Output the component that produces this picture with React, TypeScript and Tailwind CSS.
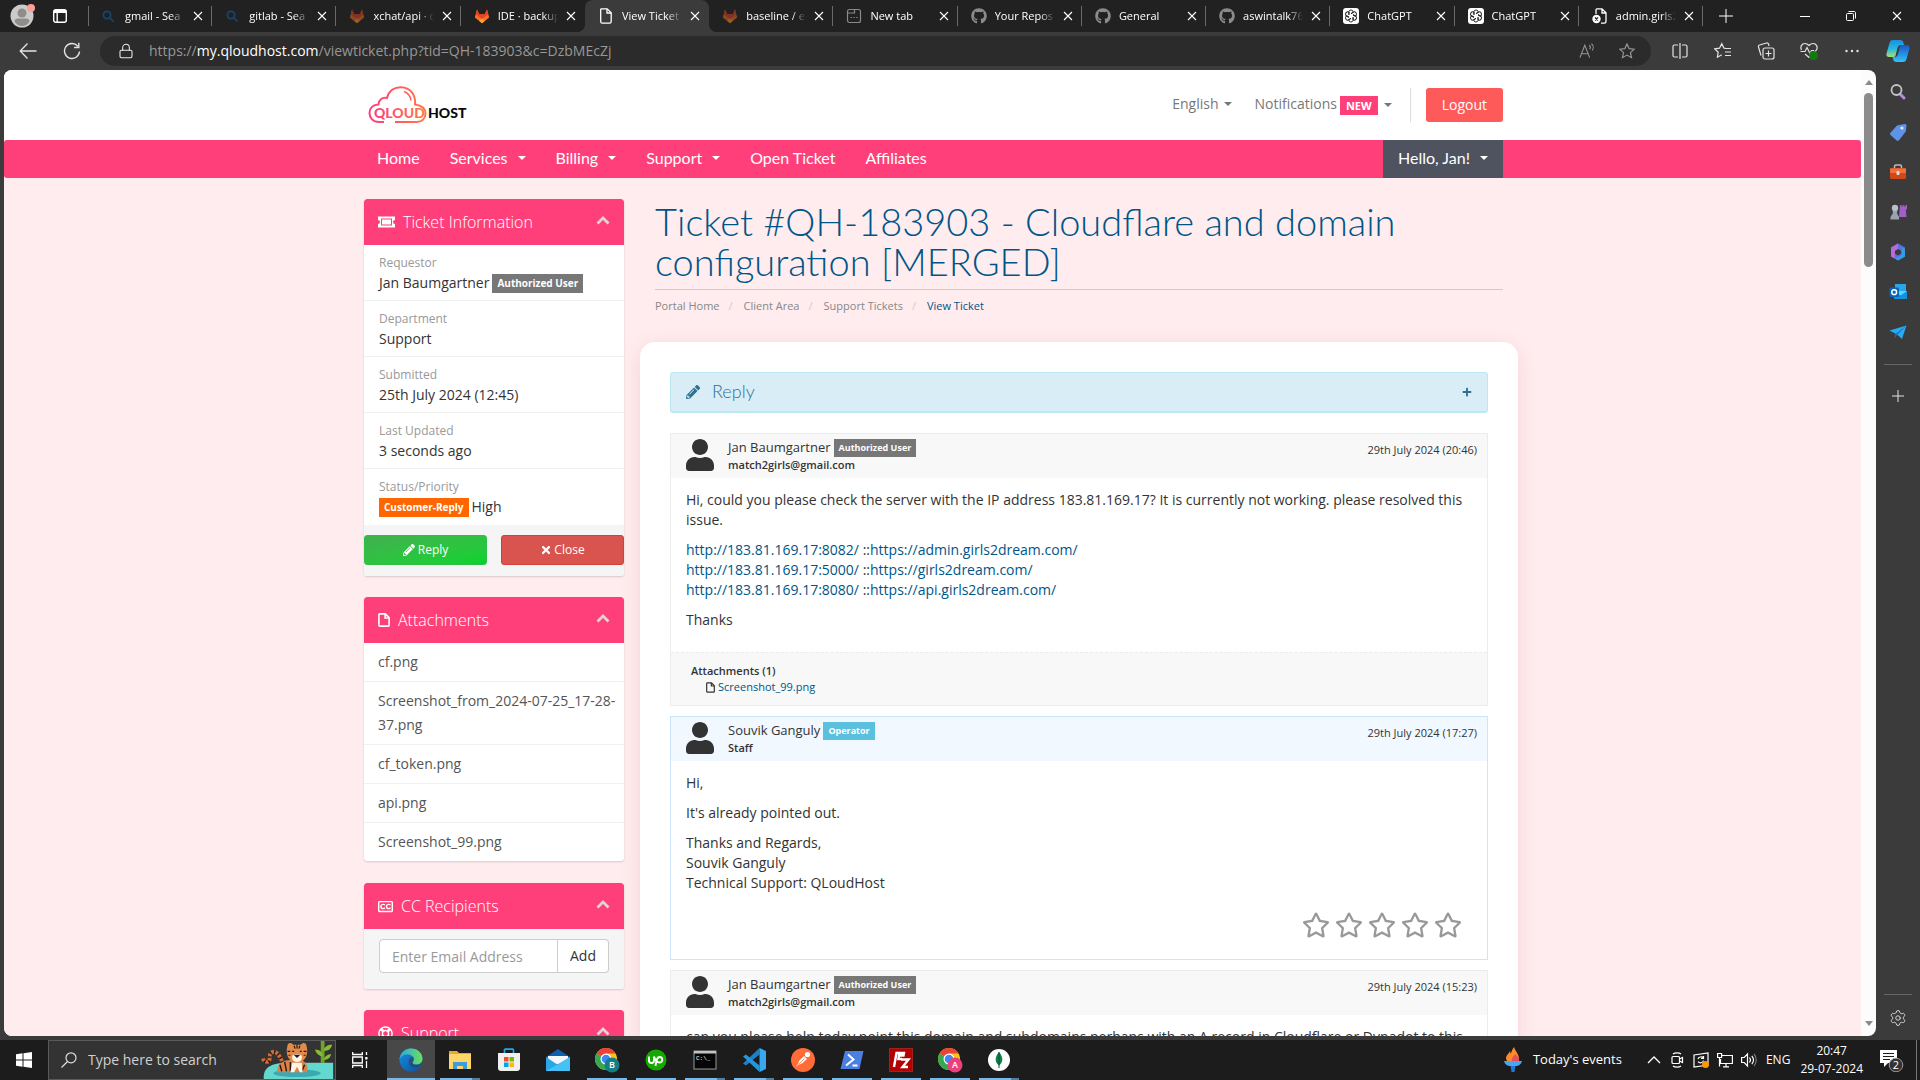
import React from "react";
import {
  FaGithub,
  FaPencilAlt,
  FaPlus,
  FaRegClosedCaptioning,
  FaRegLifeRing,
  FaRegStar,
  FaTimes,
  FaUser,
} from "react-icons/fa";
import { Lock, Settings } from "lucide-react";

/* ---------- shared small drawings ---------- */

function Caret() {
  return <span className="inline-block border-x-4 border-t-4 border-x-transparent border-t-current" />;
}

function FileOutline({ className }: { className: string }) {
  return (
    <svg viewBox="0 0 12 14" className={`fill-none stroke-current ${className}`} strokeWidth="1.6">
      <path d="M1.500.9h5.800l3.800 3.800v7.600c0 .5-.3.800-.8.800H1.700c-.5 0-.8-.3-.8-.8V1.700c0-.5.2-.8.600-.8z" />
      <path d="M7.100 1v4h4" />
    </svg>
  );
}

function GitlabIcon({ dim }: { dim?: boolean }) {
  return (
    <svg viewBox="0 0 16 16" className={dim ? "size-4 opacity-50" : "size-4"}>
      <path d="M8 15.2 0.8 9.6 3 1.4 5.3 6.2h5.4L13 1.4l2.2 8.2z" fill="#fc6d26" />
      <path d="M3 1.4 5.3 6.2h5.4L13 1.4l1.2 4.8L8 11 1.8 6.2z" fill="#e24329" />
      <path d="M8 15.2 5 12.8 8 10.4l3 2.4z" fill="#fca326" />
    </svg>
  );
}

function BingIcon() {
  return (
    <svg viewBox="0 0 16 16" className="size-4 fill-none stroke-[#17456d]" strokeWidth="1.8">
      <circle cx="6" cy="7" r="3.6" />
      <path d="m8.600 9.700 4 4" />
    </svg>
  );
}

function PageIcon() {
  return (
    <svg viewBox="0 0 16 16" className="size-4 fill-none stroke-white" strokeWidth="1.3">
      <path d="M3.2.8h6l4 4v8.7c0 1-.6 1.7-1.6 1.7H4.4c-1 0-1.7-.7-1.7-1.7V1.9c0-.6.2-1.1.5-1.1z" />
      <path d="M9 1v4h4.2" />
    </svg>
  );
}

function NewTabIcon() {
  return (
    <svg viewBox="0 0 16 16" className="size-4 fill-none stroke-[#8a8a8a]" strokeWidth="1.2">
      <rect x="1.5" y="1.5" width="13" height="13" rx="2" />
      <path d="M1.5 5h7V1.5M4.500 9.500h1.400M7.300 9.500h1.400M10.200 9.500h1.400" />
    </svg>
  );
}

function OpenAiIcon() {
  return (
    <svg viewBox="0 0 16 16" className="size-4">
      <rect width="16" height="16" rx="3" fill="#fff" />
      <g fill="none" stroke="#222" strokeWidth="1">
        {[0, 60, 120, 180, 240, 300].map((a) => (
          <path key={a} transform={`rotate(${a} 8 8)`} d="M8 5.6 10.3 4.3a2.3 2.3 0 0 0-4.4-.9V6.8" />
        ))}
      </g>
    </svg>
  );
}

function AdminIcon() {
  return (
    <svg viewBox="0 0 16 16" className="size-4 fill-none stroke-white" strokeWidth="1.3">
      <path d="M4 6V1.8C4 1.2 4.4.8 5 .8h5l4 4v8.7c0 1-.6 1.7-1.6 1.7H9M10 .8V5h4" />
      <circle cx="4.5" cy="11" r="4.2" fill="#fff" stroke="none" />
      <path d="m3 9.500 3 3m0-3-3 3" stroke="#222" />
    </svg>
  );
}

function CloseIcon() {
  return (
    <svg viewBox="0 0 10 10" className="size-[10px] stroke-white" strokeWidth="1.1">
      <path d="m1 1 8 8m0-8-8 8" />
    </svg>
  );
}

/* ---------- browser tab strip ---------- */

type Tab = { title: string; icon: React.ReactNode; active?: boolean; plain?: boolean };

const tabs: Tab[] = [
  { title: "gmail - Sea", icon: <BingIcon /> },
  { title: "gitlab - Sea", icon: <BingIcon /> },
  { title: "xchat/api · c", icon: <GitlabIcon dim /> },
  { title: "IDE · backup", icon: <GitlabIcon />, plain: true },
  { title: "View Ticket", icon: <PageIcon />, active: true, plain: true },
  { title: "baseline / e", icon: <GitlabIcon dim /> },
  { title: "New tab", icon: <NewTabIcon /> },
  { title: "Your Repos", icon: <FaGithub className="size-4 text-[#8a8a8a]" /> },
  { title: "General", icon: <FaGithub className="size-4 text-[#8a8a8a]" /> },
  { title: "aswintalk76", icon: <FaGithub className="size-4 text-[#8a8a8a]" /> },
  { title: "ChatGPT", icon: <OpenAiIcon /> },
  { title: "ChatGPT", icon: <OpenAiIcon /> },
  { title: "admin.girls2", icon: <AdminIcon /> },
];

function TabStrip() {
  return (
    <div className="flex h-8 shrink-0 items-center bg-[#212121] text-white">
      <div className="flex w-[88px] shrink-0 items-center gap-[19px] pl-[10px]">
        <button aria-label="Profile" className="relative size-6">
          <svg viewBox="0 0 24 24" className="size-6">
            <circle cx="12" cy="12" r="11.5" fill="#cdcbc9" />
            <circle cx="12" cy="9" r="4.5" fill="#8f8d8b" />
            <path d="M4.5 17.5c0-2 1.5-3 3.5-3h8c2 0 3.5 1 3.5 3-2 3-4.5 4.5-7.5 4.5s-5.5-1.5-7.5-4.5z" fill="#8f8d8b" />
          </svg>
          <span className="absolute -right-px top-0 size-2 rounded-full bg-[#ff9d96]" />
        </button>
        <button aria-label="Tab actions">
          <svg viewBox="0 0 14 14" className="size-[14px] fill-none stroke-white" strokeWidth="1.4">
            <rect x=".7" y=".7" width="12.6" height="12.6" rx="2" />
            <path d="M1 2.500h12" strokeWidth="3" />
            <path d="M4.2 3v10" />
          </svg>
        </button>
      </div>
      <div className="flex h-full min-w-0 grow">
        {tabs.map((t, i) => (
          <div
            key={i}
            className={
              t.active
                ? "relative flex min-w-0 flex-1 items-center rounded-t-lg bg-[#3b3b3b] pl-[13px] pr-[9px]"
                : "relative flex min-w-0 flex-1 items-center pl-[13px] pr-[9px]"
            }
          >
            {i === 0 && <span className="absolute left-0 top-[6px] h-5 w-px bg-[#6a6a6a]" />}
            {!t.plain && <span className="absolute right-0 top-[6px] h-5 w-px bg-[#6a6a6a]" />}
            {t.active && (
              <>
                <span className="absolute -left-2 bottom-0 size-2 bg-[radial-gradient(circle_at_0_0,#212121_8px,#3b3b3b_8px)]" />
                <span className="absolute -right-2 bottom-0 size-2 bg-[radial-gradient(circle_at_100%_0,#212121_8px,#3b3b3b_8px)]" />
              </>
            )}
            <span className="shrink-0">{t.icon}</span>
            <span className="ml-2 min-w-0 grow overflow-hidden whitespace-nowrap text-[11px] leading-4 [mask-image:linear-gradient(to_right,#000_75%,transparent)]">
              {t.title}
            </span>
            <button aria-label={`Close ${t.title}`} className="ml-2 shrink-0">
              <CloseIcon />
            </button>
          </div>
        ))}
      </div>
      <div className="flex w-[217px] shrink-0 items-center pl-4 pr-[18px]">
        <button aria-label="New tab">
          <svg viewBox="0 0 14 14" className="size-[14px] stroke-white">
            <path d="M7 0v14M0 7h14" />
          </svg>
        </button>
        <div className="ml-auto flex items-center gap-9">
          <button aria-label="Minimize">
            <svg viewBox="0 0 10 10" className="size-[10px] stroke-white"><path d="M0 5.500h10" /></svg>
          </button>
          <button aria-label="Restore">
            <svg viewBox="0 0 10 10" className="size-[10px] fill-none stroke-white">
              <rect x=".5" y="2.5" width="7" height="7" rx="1" />
              <path d="M2.5.5H8c1 0 1.500.5 1.500 1.500v5.500" />
            </svg>
          </button>
          <button aria-label="Close window"><CloseIcon /></button>
        </div>
      </div>
    </div>
  );
}

/* ---------- address bar ---------- */

const line = "size-[18px] fill-none stroke-[#e4e4e4]";

function Toolbar() {
  return (
    <div className="flex h-[38px] shrink-0 items-center bg-[#3b3b3b]">
      <div className="flex w-[100px] shrink-0 items-center gap-[26px] pl-[19px]">
        <button aria-label="Back">
          <svg viewBox="0 0 18 18" className={line} strokeWidth="1.3"><path d="M17.500 9H1.500M8.500 1.500 1.200 9l7.300 7.500" /></svg>
        </button>
        <button aria-label="Refresh">
          <svg viewBox="0 0 18 18" className={line} strokeWidth="1.4"><path d="M16.500 9.500A7.500 7.500 0 1 1 14.800 4.200M15.800.8v4.700h-4.700" /></svg>
        </button>
      </div>
      <div className="flex h-[30px] grow items-center rounded-full bg-[#2b2b2b] pl-[18px] pr-4">
        <Lock className="size-4 text-[#e8e8e8]" strokeWidth={1.6} />
        <div role="textbox" aria-label="Address" className="ml-[15px] grow whitespace-nowrap text-sm text-[#979797]">
          https://<span className="text-white">my.qloudhost.com</span>/viewticket.php?tid=QH-183903&amp;c=DzbMEcZj
        </div>
        <button aria-label="Read aloud" className="mr-6">
          <svg viewBox="0 0 18 18" className="size-4 fill-none stroke-[#979797]" strokeWidth="1.2">
            <path d="m1 16.500 5.500-14 5.500 14M3 12h7M11.500 2.500c1.500 1 1.500 3 .5 4.500M14 .8c2.500 1.800 2.500 5.200.8 7.700" />
          </svg>
        </button>
        <button aria-label="Add to favourites">
          <svg viewBox="0 0 18 18" className="size-4 fill-none stroke-[#979797]" strokeWidth="1.3">
            <path d="m9 1 2.400 5.300 5.800.6-4.300 3.900 1.200 5.700L9 13.600l-5.100 2.900 1.200-5.700L.8 6.900l5.800-.6z" />
          </svg>
        </button>
      </div>
      <div className="flex w-[269px] shrink-0 items-center justify-between pl-5 pr-[10px]">
        <button aria-label="Split screen">
          <svg viewBox="0 0 18 18" className={line} strokeWidth="1.2"><path d="M7 3H3.500C2.500 3 2 3.500 2 4.500v9c0 1 .5 1.500 1.500 1.500H7M11 3h3.500c1 0 1.500.5 1.500 1.500v9c0 1-.5 1.500-1.500 1.500H11M9 1v16" /></svg>
        </button>
        <button aria-label="Favourites">
          <svg viewBox="0 0 18 18" className={line} strokeWidth="1.2"><path d="m12 6.500-2-.3L7.800 1.700 5.500 6.200l-4.800.6 3.500 3.400-.8 5 4.400-2.400M11 6.500h6M11 10h6M11 13.500h6" /></svg>
        </button>
        <button aria-label="Collections">
          <svg viewBox="0 0 18 18" className={line} strokeWidth="1.2"><rect x="6" y="6" width="11" height="11" rx="2" /><path d="M11.500 8.500v6M8.500 11.500h6M4 13.500 1.500 5c-.3-1 .2-1.800 1-2L9.500 1c1-.3 1.700.2 2 1l.6 2" /></svg>
        </button>
        <button aria-label="Browser essentials">
          <svg viewBox="0 0 18 18" className={line} strokeWidth="1.2"><path d="M1.500 8C0 5 1.500 1.500 5 1.500c2 0 3 1 4 2 1-1 2-2 4-2 3.500 0 5 3.500 3.500 6.500L9 15.500 5 12M.5 9.500H5l2-4 3 6 1.500-3H14" /><circle cx="13.500" cy="13.500" r="4.500" fill="#107c10" stroke="none" /></svg>
        </button>
        <button aria-label="Settings and more">
          <svg viewBox="0 0 18 18" className="size-[18px] fill-[#e4e4e4]"><circle cx="3.500" cy="9" r="1.200" /><circle cx="9" cy="9" r="1.200" /><circle cx="14.500" cy="9" r="1.200" /></svg>
        </button>
        <button aria-label="Copilot">
          <svg viewBox="0 0 24 24" className="size-6">
            <defs>
              <linearGradient id="cpa" x1="0" y1="0" x2="0" y2="1"><stop stopColor="#1a8fe0" /><stop offset=".5" stopColor="#22b8e0" /><stop offset="1" stopColor="#a6e070" /></linearGradient>
              <linearGradient id="cpb" x1="0" y1="0" x2="0" y2="1"><stop stopColor="#1c55c8" /><stop offset="1" stopColor="#2fc3fb" /></linearGradient>
            </defs>
            <path d="M7 1h7c2 0 3 1 3.500 3l.5 2h-3c-2 0-3 1-3.500 3l-1.800 7c-.4 1.500-1.200 2-2.500 2H3c-2 0-3-1.500-2.500-3.500L3.500 4C4 2 5 1 7 1z" fill="url(#cpa)" />
            <path d="M17 23h-6.500c-2 0-3-1-3.500-3l-.5-2h2c2 0 3-1 3.500-3l1.800-7c.4-1.500 1.200-2 2.500-2H21c2 0 3 1.500 2.500 3.500L20.500 20c-.5 2-1.500 3-3.500 3z" fill="url(#cpb)" />
          </svg>
        </button>
      </div>
    </div>
  );
}

/* ---------- site header ---------- */

function Logo() {
  return (
    <a href="#home" aria-label="QloudHost" className="block">
      <svg viewBox="0 0 100 38" className="h-[38px] w-[100px]">
        <defs>
          <linearGradient id="cloud" x1="0" x2="1"><stop stopColor="#fb3f7c" /><stop offset="1" stopColor="#ff7a45" /></linearGradient>
        </defs>
        <path d="M16 36H11C5 36 1.500 32 1.500 27c0-5 3.500-8.500 9-8.500C10.500 14 14 11 19 12 21 4 27 1 33 1.200 42 1.500 48 8 47 18.500c7 1 10.500 4 10.500 9S54 36 49 36H27" fill="none" stroke="url(#cloud)" strokeWidth="2" />
        <path d="M36 5.500c4 1.500 6.500 4.500 7 9" fill="none" stroke="#ff5a5a" strokeWidth="1.500" />
        <text x="6" y="32" fontFamily="Lato" fontWeight="900" fontSize="14" fill="url(#cloud)">QLOUD</text>
        <text x="60" y="32" fontFamily="Lato" fontWeight="900" fontSize="14" fill="#0a0a0a">HOST</text>
      </svg>
    </a>
  );
}

function SiteHeader() {
  return (
    <>
      <header className="bg-white">
        <div className="mx-auto flex h-[70px] max-w-[1141px] items-center pl-[6px]">
          <Logo />
          <div className="ml-auto flex items-center text-sm text-[#777]">
            <button className="flex items-center gap-[6px] pb-[2px]">English <Caret /></button>
            <button className="ml-[22px] flex items-center gap-[6px]">
              <span className="flex items-center gap-[3px]">
                <span className="pb-[2px]">Notifications</span>
                <span className="bg-[#ff3f7a] px-[6px] text-[11px] font-bold leading-[19px] text-white">NEW</span>
              </span>
              <Caret />
            </button>
            <span className="ml-[18px] h-[34px] w-px bg-[#ddd]" />
            <button className="ml-[15px] h-[34px] rounded-[3px] bg-[#ff5a5a] px-4 text-white">Logout</button>
          </div>
        </div>
      </header>
      <nav className="rounded-[3px] bg-[#ff3f7a] font-[Lato] text-base text-white">
        <div className="mx-auto flex h-[38px] max-w-[1141px] items-stretch">
          {[
            ["Home", false],
            ["Services", true],
            ["Billing", true],
            ["Support", true],
            ["Open Ticket", false],
            ["Affiliates", false],
          ].map(([label, menu]) => (
            <a key={String(label)} href="#nav" className="flex items-center gap-[10px] px-[15px] pb-[2px]">
              {label}
              {menu && <Caret />}
            </a>
          ))}
          <button className="ml-auto flex items-center gap-[10px] bg-[#4f5360] px-[15px] pb-[2px]">
            Hello, Jan! <Caret />
          </button>
        </div>
      </nav>
    </>
  );
}

/* ---------- left column ---------- */

function PanelHeading({ icon, children }: { icon: React.ReactNode; children: React.ReactNode }) {
  return (
    <h3 className="flex h-[46px] items-center gap-2 rounded-t-[3px] bg-[#ff3f7a] px-[14px] text-base font-light text-white">
      {icon}
      <span>{children}</span>
      <button aria-label="Collapse" className="mb-1 ml-auto">
        <svg viewBox="0 0 14 10" className="h-[10px] w-[14px] fill-none stroke-[#e3d3d8]" strokeWidth="2.8">
          <path d="m1.500 8.500 5.500-5.500 5.500 5.500" />
        </svg>
      </button>
    </h3>
  );
}

function Badge({ className, children }: { className: string; children: React.ReactNode }) {
  return <span className={`inline-block px-[5px] text-[10px] font-bold leading-[19px] text-white ${className}`}>{children}</span>;
}

function InfoItem({ label, children }: { label: string; children: React.ReactNode }) {
  return (
    <div className="h-14 border-b border-[#f0f0f0] px-[15px] pt-2 last:border-b-0">
      <div className="text-xs leading-5 text-[#999]">{label}</div>
      <div className="flex h-5 items-center gap-[3px] text-sm text-[#333]">{children}</div>
    </div>
  );
}

const panel = "overflow-hidden rounded-[3px] bg-white shadow-[0_1px_2px_rgba(0,0,0,0.15)]";

function LeftColumn() {
  return (
    <aside className="ml-[2px] flex w-[260px] shrink-0 flex-col">
      <section className={`${panel} mb-[21px]`}>
        <PanelHeading
          icon={
            <svg viewBox="0 0 17 12" className="h-3 w-[17px]">
              <path fillRule="evenodd" d="M0 .5h17V4a2 2 0 0 0 0 4v3.500H0V8a2 2 0 0 0 0-4zM3 2.500v7h11v-7zm1 1h9v5H4z" fill="#fff" />
            </svg>
          }
        >
          Ticket Information
        </PanelHeading>
        <div>
          <InfoItem label="Requestor">Jan Baumgartner <Badge className="bg-[#777]">Authorized User</Badge></InfoItem>
          <InfoItem label="Department">Support</InfoItem>
          <InfoItem label="Submitted">25th July 2024 (12:45)</InfoItem>
          <InfoItem label="Last Updated">3 seconds ago</InfoItem>
          <InfoItem label="Status/Priority"><Badge className="bg-[#f60]">Customer-Reply</Badge> High</InfoItem>
        </div>
        <div className="flex gap-[14px] bg-[#f5f5f5] pb-[11px] pt-[10px] text-xs text-white">
          <button className="flex h-[30px] flex-1 items-center justify-center gap-[3px] rounded-[3px] border border-[#2fbf45] bg-linear-to-br from-[#3fb04e] to-[#00d42c]">
            <FaPencilAlt className="size-3" /> Reply
          </button>
          <button className="flex h-[30px] flex-1 items-center justify-center gap-[2px] rounded-[3px] border border-[#d43f3a] bg-[#d9534f]">
            <FaTimes className="size-3" /> Close
          </button>
        </div>
      </section>

      <section className={`${panel} mb-[22px]`}>
        <PanelHeading icon={<FileOutline className="h-[14px] w-3" />}>Attachments</PanelHeading>
        <div className="text-sm leading-6 text-[#555]">
          {["cf.png", "Screenshot_from_2024-07-25_17-28-37.png", "cf_token.png", "api.png", "Screenshot_99.png"].map((f) => (
            <a key={f} href="#file" className="block border-t border-[#f0f0f0] py-[7px] pl-[14px] first:border-t-0">{f}</a>
          ))}
        </div>
      </section>

      <section className={`${panel} mb-[21px]`}>
        <PanelHeading icon={<FaRegClosedCaptioning className="size-[15px]" />}>CC Recipients</PanelHeading>
        <div className="flex bg-[#f5f5f5] px-[15px] pb-4 pt-[10px] text-sm">
          <input
            aria-label="Enter Email Address"
            placeholder="Enter Email Address"
            className="h-[34px] w-0 grow rounded-l-[4px] border border-[#ccc] bg-white px-3 placeholder:text-[#999]"
          />
          <button className="h-[34px] rounded-r-[4px] border border-l-0 border-[#ccc] bg-white px-3 text-[#333]">Add</button>
        </div>
      </section>

      <section className={panel}>
        <PanelHeading icon={<FaRegLifeRing className="size-[15px]" />}>Support</PanelHeading>
      </section>
    </aside>
  );
}

/* ---------- ticket thread ---------- */

function Post({
  name,
  sub,
  date,
  staff,
  children,
}: {
  name: string;
  sub: string;
  date: string;
  staff?: boolean;
  children: React.ReactNode;
}) {
  return (
    <article className={staff ? "mb-[10px] border border-[#cce4fc]" : "mb-[10px] border border-[#ececec]"}>
      <div className={staff ? "flex h-11 bg-[#f1f8ff] px-[15px] pt-[5px]" : "flex h-11 bg-[#f8f8f8] px-[15px] pt-[5px]"}>
        <FaUser className="h-8 w-7 shrink-0 text-[#333]" />
        <div className="ml-[14px] text-[#333]">
          <div className="flex h-[18px] items-center gap-[3px] text-[13px]">
            {name}
            {staff ? (
              <span className="bg-[#5bc0de] px-[5px] text-[9px] font-bold leading-[18px] text-white">Operator</span>
            ) : (
              <span className="bg-[#777] px-[5px] text-[9px] font-bold leading-[18px] text-white">Authorized User</span>
            )}
          </div>
          <div className="text-[11px] font-semibold leading-4">{sub}</div>
        </div>
        <time className="-mr-[5px] ml-auto pt-[2px] text-[11px] leading-[18px] text-[#333]">{date}</time>
      </div>
      {children}
    </article>
  );
}

function Thread() {
  const link = "text-[#058]";
  return (
    <main className="ml-4 -mr-[15px] min-w-0 grow">
      <div className="px-[15px]">
        <h1 className="border-b border-[#ccc] pb-2 pt-[2px] font-[Lato] text-[38px] font-light leading-10 text-[#058]">
          Ticket #QH-183903 - Cloudflare and domain configuration [MERGED]
        </h1>
        <ol className="flex pb-px pt-[7px] text-[11px] leading-[18px] text-[#888]">
          {["Portal Home", "Client Area", "Support Tickets"].map((c) => (
            <li key={c}>
              <a href="#crumb">{c}</a>
              <span className="pl-[9px] pr-[11px] text-[#ccc]">/</span>
            </li>
          ))}
          <li className={link}>View Ticket</li>
        </ol>
      </div>

      <div className="mt-[26px] rounded-[15px] bg-white px-[30px] pb-10 pt-[30px] shadow-[0_5px_20px_rgba(200,120,130,0.2)]">
        <button className="flex h-[41px] w-full items-center rounded-[3px] border border-b-2 border-[#bce8f1] bg-[#d9edf7] px-[15px] text-[#31708f]">
          <FaPencilAlt className="size-[14px]" />
          <span className="ml-3 pb-[2px] font-[Lato] text-[18px] font-light">Reply</span>
          <FaPlus className="ml-auto size-[10px]" />
        </button>

        <div className="mt-5">
          <Post name="Jan Baumgartner" sub="match2girls@gmail.com" date="29th July 2024 (20:46)">
            <div className="px-[15px] pb-[22px] pt-3 text-sm text-[#333]">
              <p className="mb-[10px]">
                Hi, could you please check the server with the IP address 183.81.169.17? It is currently not working. please resolved this issue.
              </p>
              <div className="mb-[10px]">
                {[
                  ["http://183.81.169.17:8082/", "https://admin.girls2dream.com/"],
                  ["http://183.81.169.17:5000/", "https://girls2dream.com/"],
                  ["http://183.81.169.17:8080/", "https://api.girls2dream.com/"],
                ].map(([a, b]) => (
                  <div key={a}>
                    <a href="#a" className={link}>{a}</a> ::<a href="#b" className={link}>{b}</a>
                  </div>
                ))}
              </div>
              <p>Thanks</p>
            </div>
            <div className="border-t border-dashed border-[#ececec] bg-[#f8f8f8] px-5 py-[10px] text-[11px] leading-4">
              <strong className="block font-semibold text-[#333]">Attachments (1)</strong>
              <a href="#shot" className="flex items-center gap-[3px] pl-[15px] text-[#058]">
                <FileOutline className="h-[11px] w-[9px] text-[#333]" /> Screenshot_99.png
              </a>
            </div>
          </Post>

          <Post name="Souvik Ganguly" sub="Staff" date="29th July 2024 (17:27)" staff>
            <div className="px-[15px] pt-3 text-sm text-[#333]">
              <p className="mb-[10px]">Hi,</p>
              <p className="mb-[10px]">It's already pointed out.</p>
              <p>Thanks and Regards,<br />Souvik Ganguly<br />Technical Support: QLoudHost</p>
            </div>
            <div className="flex justify-end gap-[5px] pb-[21px] pr-[25px] pt-[19px] text-[#999]">
              {[1, 2, 3, 4, 5].map((n) => (
                <button key={n} aria-label={`Rate ${n}`}><FaRegStar className="h-[26px] w-7" /></button>
              ))}
            </div>
          </Post>

          <Post name="Jan Baumgartner" sub="match2girls@gmail.com" date="29th July 2024 (15:23)">
            <div className="px-[15px] pb-[22px] pt-3 text-sm text-[#333]">
              <p>can you please help today point this domain and subdomains perhaps with an A record in Cloudflare or Dynadot to this server.</p>
            </div>
          </Post>
        </div>
      </div>
    </main>
  );
}

/* ---------- browser side bar ---------- */

function EdgeSidebar() {
  const s = "size-5";
  return (
    <div className="flex w-11 shrink-0 flex-col items-center bg-[#3b3b3b] pt-3">
      <div className="flex flex-col gap-5">
        <button aria-label="Search"><svg viewBox="0 0 20 20" className={s}><path d="m12 12 4 4" stroke="#b58ae0" strokeWidth="3" strokeLinecap="round" /><circle cx="8.500" cy="8" r="5" fill="none" stroke="#c4c4c4" strokeWidth="1.800" /></svg></button>
        <button aria-label="Shopping"><svg viewBox="0 0 20 20" className={s}><path d="m9 3.500 7.500-1.500c1-.2 2 .6 2 1.600l-.7 6L11 18.300c-.7.9-1.500 1-2.300.3L2.500 13c-.7-.7-.7-1.500 0-2.300z" fill="#5e93e8" /><circle cx="14" cy="6" r="1.600" fill="#dbe9ff" /></svg></button>
        <button aria-label="Tools"><svg viewBox="0 0 20 20" className={s}><path d="M6.500 6V4.500c0-1 .5-1.500 1.500-1.500h4c1 0 1.500.5 1.500 1.500V6" fill="none" stroke="#bbb" strokeWidth="1.500" /><rect x="2" y="6" width="16" height="11" rx="1.500" fill="#d0481a" /><path d="M2 6.500h16v4.500H2z" fill="#f0703a" /><rect x="8.500" y="9" width="3" height="4" rx="1" fill="#ddd" /></svg></button>
        <button aria-label="Games"><svg viewBox="0 0 20 20" className={s}><path d="M12 3h1.500v1.500h1.200V3h1.600v1.500h1.200V3H19v4l-1.200 1 .7 7H11z" fill="#a35fc8" /><circle cx="7" cy="6" r="3.200" fill="#b9bfc8" /><path d="M4.500 9h5l-.7 2 2.200 4v2.500H2.500V15l2.500-4z" fill="#9aa2ae" /></svg></button>
        <button aria-label="Microsoft 365"><svg viewBox="0 0 20 20" className={s}><path d="M10 1.500 17 5.500v9L10 18.500 3 14.500v-9z" fill="#5c6fe0" /><path d="M3 5.500 10 1.500v6L7 9.500v7L3 14.500z" fill="#b46bd8" /><path d="M17 14.500 10 18.500l-3-2 7-4v-7l3 1.500z" fill="#2f9de8" /><path d="m10 7 3 1.700v3L10 13.400l-3-1.700v-3z" fill="#3b3b3b" /></svg></button>
        <button aria-label="Outlook"><svg viewBox="0 0 20 20" className={s}><rect x="7" y="2" width="11" height="9" fill="#28a8ea" /><path d="M6 9h13v8H6z" fill="#50d9ff" /><path d="m6 9 6.500 4.500L19 9v8H6z" fill="#1490df" /><rect x="1.500" y="5.500" width="9.500" height="9.500" rx="1" fill="#0a64b8" /><circle cx="6.200" cy="10.200" r="2.400" fill="none" stroke="#fff" strokeWidth="1.500" /></svg></button>
        <button aria-label="Drop"><svg viewBox="0 0 20 20" className={s}><path d="M1.500 8.500 18.500 3.500 14 17l-5-4.500z" fill="#2aa9f0" /><path d="m18.500 3.500-11 8.500-1 4.500L9 13z" fill="#1278c0" /></svg></button>
      </div>
      <span className="mt-[22px] h-px w-7 bg-[#666]" />
      <button aria-label="Customize" className="mt-[25px]"><svg viewBox="0 0 12 12" className="size-3 stroke-[#e4e4e4]"><path d="M6 0v12M0 6h12" /></svg></button>
      <span className="mt-auto h-px w-7 bg-[#666]" />
      <button aria-label="Settings" className="mb-[13px] mt-[14px]"><Settings className="size-[18px] text-[#d8d8d8]" strokeWidth={1.3} /></button>
    </div>
  );
}

/* ---------- taskbar ---------- */

function ChromeIcon({ badge, color }: { badge: string; color: string }) {
  return (
    <svg viewBox="0 0 26 26" className="size-[26px]">
      <circle cx="12" cy="12" r="11" fill="#fbc116" />
      <path d="M12 12 2.500 6.500A11 11 0 0 1 21.500 6.500H12z" fill="#ea4335" />
      <path d="M12 12 2.500 6.500A11 11 0 0 0 12 23l4-8.500z" fill="#34a853" />
      <circle cx="12" cy="12" r="5.500" fill="#fff" />
      <circle cx="12" cy="12" r="4.300" fill="#4285f4" />
      <circle cx="18" cy="18" r="7.500" fill={color} />
      <text x="18" y="21" textAnchor="middle" fontSize="9" fontFamily="Open Sans" fontWeight="600" fill="#fff">{badge}</text>
    </svg>
  );
}

const apps: { name: string; icon: React.ReactNode; open?: boolean; active?: boolean; stacked?: boolean }[] = [
  {
    name: "Edge", open: true, active: true,
    icon: (
      <svg viewBox="0 0 24 24" className="size-6">
        <defs>
          <linearGradient id="eg" x1="0" x2="1"><stop stopColor="#2aa9e8" /><stop offset="1" stopColor="#6be05a" /></linearGradient>
          <linearGradient id="eb" x1="0" y1="0" x2="1" y2="1"><stop stopColor="#1b8fe0" /><stop offset="1" stopColor="#0c4f9e" /></linearGradient>
        </defs>
        <circle cx="12" cy="12" r="11.500" fill="url(#eb)" />
        <path d="M.5 12C.8 5 6 .5 12 .5c7 0 11.500 5 11.500 10 0 4-3 6-6 6-2.500 0-4-1-4-1.800 0-.7 1.300-1.200 1.300-3.200C14.800 8.500 12 6.500 8.500 6.500 4.500 6.500 1.500 8.500.5 12z" fill="url(#eg)" />
        <path d="M14.500 9c.8 2.500-1 4-1 5.500 0 1.500 2 2.500 4.500 2.300 2-.1 3.500-.9 4.500-1.800-1 3-4 5-7.500 4.500-4-.5-6-4-5-7.500.5-1.800 2.500-3.500 4.500-3z" fill="#383838" opacity=".5" />
      </svg>
    ),
  },
  {
    name: "File Explorer", open: true, stacked: true,
    icon: <svg viewBox="0 0 24 24" className="size-6"><path d="M1 3h8l2 2h12v4H1z" fill="#e8a92d" /><path d="M1 6h22v15H1z" fill="#ffd668" /><path d="M5 21v-7h14v7h-4v-3H9v3z" fill="#3d9be0" /></svg>,
  },
  {
    name: "Microsoft Store",
    icon: <svg viewBox="0 0 24 24" className="size-6"><path d="M7.500 5V2.200c0-.6.4-1 1-1h7c.6 0 1 .4 1 1V5" fill="none" stroke="#22a7ec" strokeWidth="1.700" /><path d="M1 5h22v15c0 2-1 3-3 3H4c-2 0-3-1-3-3z" fill="#f0f0f0" /><path d="M7 9h4.500v4.500H7z" fill="#f25022" /><path d="M12.500 9H17v4.500h-4.500z" fill="#7fba00" /><path d="M7 14.500h4.500V19H7z" fill="#00a4ef" /><path d="M12.500 14.500H17V19h-4.500z" fill="#ffb900" /></svg>,
  },
  {
    name: "Mail",
    icon: <svg viewBox="0 0 24 24" className="size-6"><path d="M0 9 12 1l12 8v14H0z" fill="#0f5eb0" /><path d="M2 8h20v8H2z" fill="#f4f8fc" /><path d="m0 9 12 8 12-8v14H0z" fill="#2ba5e8" /><path d="M0 23 24 9v14z" fill="#46c1f5" /></svg>,
  },
  { name: "Chrome", open: true, icon: <ChromeIcon badge="B" color="#147e87" /> },
  {
    name: "Upwork", open: true,
    icon: <svg viewBox="0 0 24 24" className="size-6"><circle cx="12" cy="12" r="10.500" fill="#14a800" /><path d="M5 8.500v4c0 3.300 5 3.300 5 0v-4c1 3 3 6 5.500 6 3.500 0 3.800-5.500.3-5.500-3.300 0-3.300 3.500-4.300 9" fill="none" stroke="#fff" strokeWidth="1.900" /></svg>,
  },
  {
    name: "Command Prompt", open: true, stacked: true,
    icon: <svg viewBox="0 0 24 24" className="size-6"><rect x="1" y="3" width="22" height="18" fill="#050505" stroke="#999" /><path d="M1 3h22v2.500H1z" fill="#c4c4c4" /><text x="3" y="12" fontSize="6" fontFamily="Liberation Mono" fill="#fff">C:\_</text></svg>,
  },
  {
    name: "Visual Studio Code", open: true, stacked: true,
    icon: <svg viewBox="0 0 24 24" className="size-6"><path d="M17.500 0v6.500L4 17.500 1 15.500z" fill="#1f7fc4" /><path d="M17.500 24v-6.500L4 6.500 1 8.500z" fill="#2496dc" /><path d="M17.500 0 24 3v18l-6.500 3z" fill="#3aa8f0" /></svg>,
  },
  {
    name: "Postman", open: true,
    icon: <svg viewBox="0 0 24 24" className="size-6"><circle cx="12" cy="12" r="12" fill="#ff6c37" /><circle cx="16.500" cy="6.500" r="2.600" fill="#fff" /><path d="m13 8 3 3-5 4.500-3.500 1.200L4.500 19l2.800-3.500L8 13z" fill="#fff" /><path d="m7.500 16.500 6-6" stroke="#ff6c37" strokeWidth=".8" /></svg>,
  },
  {
    name: "PowerShell", open: true,
    icon: <svg viewBox="0 0 24 24" className="size-6"><path d="M5 3h18.500L19.500 21H.5z" fill="#4b7fe0" /><path d="m8 6.500 5.500 5L6 17.500M12.500 17.500h5" fill="none" stroke="#fff" strokeWidth="2" /></svg>,
  },
  {
    name: "FileZilla", open: true,
    icon: <svg viewBox="0 0 24 24" className="size-6"><rect x=".5" y=".5" width="23" height="23" fill="#b30000" stroke="#d33" strokeDasharray="1 1" /><path d="M5 19 7.500 5H15l-.5 2.500H10L9.400 11H13M12 11.500h7.500l-6 7.500h5.500" fill="none" stroke="#fff" strokeWidth="2.400" /></svg>,
  },
  { name: "Chrome profile", open: true, icon: <ChromeIcon badge="A" color="#ec407a" /> },
  {
    name: "MongoDB Compass", open: true, stacked: true,
    icon: <svg viewBox="0 0 24 24" className="size-6"><circle cx="12" cy="12" r="11" fill="#fff" /><path d="M12 4c2.500 3 3.300 5 3.300 7.500 0 2.500-1.300 4.500-3.300 6-2-1.500-3.300-3.500-3.300-6C8.700 9 9.500 7 12 4z" fill="#13804a" /><path d="M12 4v16" stroke="#0b4f30" /></svg>,
  },
];

function Tiger() {
  return (
    <svg viewBox="0 0 76 40" className="h-[38px] w-[76px] shrink-0">
      <path d="M3 40c-1-12 8-17 25-17h48v17z" fill="#62d8cf" />
      <ellipse cx="38" cy="34" rx="25" ry="4" fill="#3aa9b4" />
      <path d="M65 23V0" stroke="#6ea527" strokeWidth="4" fill="none" />
      <path d="M65 16c-4 0-7-3-8-7 5 0 8 3 8 7zM66 10c1-4 4-6 9-6-1 4-4 7-9 6zM66 20c1-4 4-6 8-6-1 4-4 6-8 6z" fill="#86bd35" />
      <path d="M24 27C20 12 14 9 10 13c-2 3 1 8-3 9-3 .5-5-2-5-5" fill="none" stroke="#c9703a" strokeWidth="4" />
      <path d="M24 27C20 12 14 9 10 13c-2 3 1 8-3 9-3 .5-5-2-5-5" fill="none" stroke="#2a1a12" strokeWidth="4" strokeDasharray="1.500 3" />
      <path d="M17 33c0-8 5-13 14-13h12c6 3 7 9 5 13z" fill="#d9834a" />
      <path d="m20 25 2 7M25 22l2 10M31 22v10M46 25l-3 7" stroke="#2a1a12" strokeWidth="1.500" />
      <path d="M28 5c0-3 4-4 6-1h8c2-3 6-2 6 1 2 7 0 13-4 16-3 2-9 2-12 0-4-3-6-9-4-16z" fill="#e28a4a" />
      <path d="M33 16c1-3 9-3 10 0 1 4-2 6-5 6s-6-2-5-6z" fill="#fff3e2" />
      <path d="M36 15h4l-2 2zM33 11h2M41 11h2M38 4v4M35 5l1 3M41 5l-1 3M28 11h3M45 11h3M29 15h2M45 15h2" stroke="#2a1a12" strokeWidth="1.300" />
      <path d="M33 23h10l1 10h-3l-3-6-3 6h-4z" fill="#fff3e2" />
    </svg>
  );
}

function Taskbar() {
  return (
    <footer className="flex h-10 shrink-0 items-stretch bg-[#1c1c1c] text-white">
      <button aria-label="Start" className="flex w-12 items-center justify-center">
        <svg viewBox="0 0 16 16" className="size-4 fill-white"><path d="M0 2.200 6.500 1.300v6.200H0zM7.500 1.200 16 0v7.500H7.500zM0 8.500h6.500v6.200L0 13.800zM7.500 8.500H16V16l-8.500-1.200z" /></svg>
      </button>
      <label className="flex w-72 items-center overflow-hidden border border-[#5a5a5a] bg-[#333] pl-3">
        <svg viewBox="0 0 16 16" className="size-4 shrink-0 fill-none stroke-[#ddd]" strokeWidth="1.200"><circle cx="10" cy="5.800" r="5" /><path d="M6.500 9.500.5 15.500" /></svg>
        <input aria-label="Type here to search" placeholder="Type here to search" className="ml-[11px] w-0 grow bg-transparent text-sm placeholder:text-[#d0d0d0]" />
        <Tiger />
      </label>
      <button aria-label="Task view" className="flex w-[51px] items-center justify-center pr-[3px]">
        <svg viewBox="0 0 16 16" className="size-4 fill-none stroke-white" strokeWidth="1.300"><path d="M.7 0v2.500h9.600V0M.7 16v-2.500h9.600V16M.7 5h9.600v6H.7zM14.500 0v3M14.500 9v7" /><path d="M13.200 5h2.300v2.500h-2.300z" fill="#fff" stroke="none" /></svg>
      </button>
      <div className="flex gap-px">
        {apps.map((a) => (
          <button
            key={a.name}
            aria-label={a.name}
            className={a.active ? "relative flex w-12 items-center justify-center bg-[#484848]" : "relative flex w-12 items-center justify-center"}
          >
            {a.icon}
            {a.open && (
              <span className={a.active ? "absolute inset-x-0 bottom-0 h-[2px] bg-[#76b9ed]" : "absolute inset-x-1 bottom-0 flex h-[2px] bg-[#76b9ed]"}>
                {a.stacked && <span className="ml-auto w-2 bg-[#527f9f]" />}
              </span>
            )}
          </button>
        ))}
      </div>
      <div className="ml-auto flex items-center text-xs">
        <button className="flex items-center gap-[11px] text-[13px]">
          <svg viewBox="0 0 18 26" className="h-[26px] w-[18px]">
            <path d="M3 14C0 9 5 7 6 4c.5 1 .5 2 .5 3C8 5 8 2 10 0c1 4 6 8 5 14z" fill="#ff8a2a" />
            <path d="M8 14c-1-3 2-5 3-7 2 2 5 4 4 7z" fill="#e84f5c" />
            <path d="M0 14h18c-1 4-4 5-6 5H6c-2 0-5-1-6-5z" fill="#46a6f2" />
            <path d="M6.500 19h5L10.500 25h-3z" fill="#2575d8" />
          </svg>
          Today's events
        </button>
        <div className="ml-[25px] flex items-center gap-2">
          <button aria-label="Show hidden icons"><svg viewBox="0 0 14 14" className="size-[14px] fill-none stroke-white" strokeWidth="1.300"><path d="m1 10 6-6 6 6" /></svg></button>
          <svg viewBox="0 0 16 16" className="size-4 fill-none stroke-white" strokeWidth="1.200"><rect x="3" y="4.500" width="7.500" height="7" rx="1" /><path d="m10.500 7 3-1.500v5l-3-1.500M4 2c2-1.500 6-1.500 8 0M4 14c2 1.500 6 1.500 8 0" /></svg>
          <svg viewBox="0 0 16 16" className="size-4 fill-none stroke-white" strokeWidth="1.200"><path d="M1 3 15 1v12L1 15zM5 7c.5-2 4-3 5.500-1M10.500 4v2.500H8M10.500 8.500c-.5 2.500-4 3-5.500 1.200" /><circle cx="12.500" cy="12.500" r="3.500" fill="#ff9800" stroke="none" /></svg>
          <svg viewBox="0 0 16 16" className="size-4 fill-none stroke-white" strokeWidth="1.200"><path d="M5 3.500h10.400v8H3.500V7M9 11.500v3M6 14.800h6M.6 1.500h4v4h-4zM2.500 5.500v9" /></svg>
          <svg viewBox="0 0 16 16" className="size-4 fill-none stroke-white" strokeWidth="1.200"><path d="M.6 5.500h2.600L6.500 2v12L3.200 10.500H.6zM8.500 5.500c1.200 1.500 1.200 3.500 0 5M10.800 3.800c2 2.500 2 6 0 8.400" /><path d="M13 2c3 3.500 3 8.500 0 12" stroke="#777" /></svg>
          <span className="ml-px">ENG</span>
        </div>
        <div className="ml-[10px] text-center leading-[18px]">20:47<br />29-07-2024</div>
        <button aria-label="Notifications" className="relative ml-[17px] size-6">
          <svg viewBox="0 0 24 24" className="size-6">
            <path d="M0 2h17v13H8l-4 4v-4H0z" fill="#fff" />
            <path d="M3 5.500h11M3 8.500h11M3 11.500h7" stroke="#1c1c1c" />
            <circle cx="16" cy="17" r="6.800" fill="#333" stroke="#999" />
            <text x="16" y="21" textAnchor="middle" fontSize="11" fontFamily="Open Sans" fill="#fff">2</text>
          </svg>
        </button>
        <span className="ml-3 mr-[3px] h-10 w-px bg-[#777]" />
      </div>
    </footer>
  );
}

/* ---------- page ---------- */

export default function App() {
  return (
    <div className="flex h-screen flex-col overflow-hidden bg-[#3b3b3b] font-['Open_Sans',sans-serif]">
      <TabStrip />
      <Toolbar />
      <div className="flex min-h-0 grow">
        <div className="mb-1 ml-1 flex min-w-0 grow overflow-hidden rounded-lg bg-[#fcfcfc]">
          <div className="min-w-0 grow overflow-hidden bg-[#ffecee]">
            <SiteHeader />
            <div className="mx-auto flex max-w-[1141px] pt-[21px]">
              <LeftColumn />
              <Thread />
            </div>
          </div>
          <div className="flex w-[15px] shrink-0 flex-col items-center py-[10px]">
            <span className="border-x-4 border-b-[5px] border-x-transparent border-b-[#8a8a8a]" />
            <span className="mt-2 h-[174px] w-[9px] rounded-full bg-[#8b8b8b]" />
            <span className="mt-auto border-x-4 border-t-[5px] border-x-transparent border-t-[#8a8a8a]" />
          </div>
        </div>
        <EdgeSidebar />
      </div>
      <Taskbar />
    </div>
  );
}
